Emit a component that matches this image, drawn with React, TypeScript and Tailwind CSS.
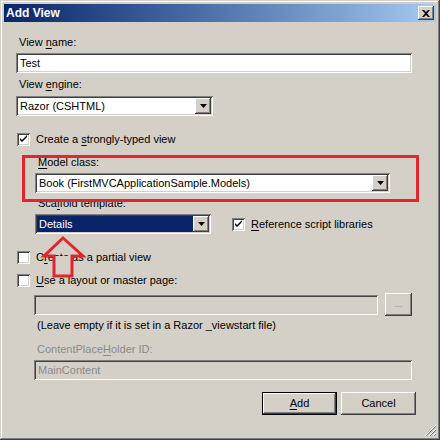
import type { ReactNode } from 'react';

const raised =
  'shadow-[inset_-1px_-1px_#404040,inset_1px_1px_#ffffff,inset_-2px_-2px_#808080,inset_2px_2px_#d4d0c8]';
const sunken =
  'shadow-[inset_1px_1px_#808080,inset_-1px_-1px_#ffffff,inset_2px_2px_#404040,inset_-2px_-2px_#d4d0c8]';

function Label({ children, disabled }: { children: ReactNode; disabled?: boolean }) {
  return (
    <div className={`h-[13px] text-[11px] leading-[13px] pl-[3px] ${disabled ? 'text-[#8a8a8a]' : 'text-black'}`}>
      {children}
    </div>
  );
}

function U({ children }: { children: ReactNode }) {
  return <span className="underline underline-offset-[2px] decoration-1">{children}</span>;
}

function Checkbox({ checked }: { checked?: boolean }) {
  return (
    <div className={`relative h-[13px] w-[13px] shrink-0 bg-white ${sunken}`}>
      {checked && (
        <svg className="absolute left-0 top-0" width="13" height="13" viewBox="0 0 13 13">
          <path d="M3 5 L3 7 L5 9 L10 4 L10 2 L5 7 Z" fill="#000" />
        </svg>
      )}
    </div>
  );
}

function DropArrow() {
  return (
    <div className={`flex h-full w-[16px] shrink-0 items-center justify-center bg-[#d4d0c8] ${raised}`}>
      <svg width="7" height="4" viewBox="0 0 7 4">
        <path d="M0 0 H7 L3.5 4 Z" fill="#000" />
      </svg>
    </div>
  );
}

function Select({ value, width, selected }: { value: string; width: string; selected?: boolean }) {
  return (
    <div className={`flex h-[20px] ${width} bg-white p-[2px] ${sunken}`}>
      <div
        className={`flex flex-1 items-center pl-[2px] text-[11px] ${
          selected ? 'bg-[#0a246a] text-white' : 'text-black'
        }`}
      >
        {value}
      </div>
      <DropArrow />
    </div>
  );
}

function TextBox({ value, width, disabled }: { value?: string; width: string; disabled?: boolean }) {
  return (
    <div
      className={`flex h-[20px] ${width} items-center pl-[4px] text-[11px] ${sunken} ${
        disabled ? 'bg-[#d4d0c8] text-[#8a8a8a]' : 'bg-white text-black'
      }`}
    >
      {value}
    </div>
  );
}

function Button({ children, isDefault }: { children: ReactNode; isDefault?: boolean }) {
  return (
    <div
      className={`flex h-[23px] w-[75px] items-center justify-center bg-[#d4d0c8] text-[11px] text-black ${
        isDefault
          ? 'border border-black shadow-[inset_-1px_-1px_#404040,inset_1px_1px_#ffffff,inset_-2px_-2px_#808080]'
          : raised
      }`}
    >
      {children}
    </div>
  );
}

export default function App() {
  return (
    <div className="relative h-[440px] w-[440px] bg-[#d4d0c8] p-[4px] font-['Liberation_Sans',Arial,sans-serif] shadow-[inset_-1px_-1px_#404040,inset_1px_1px_#d4d0c8,inset_-2px_-2px_#808080,inset_2px_2px_#ffffff]">
      <div className="flex h-[18px] items-center justify-between bg-gradient-to-r from-[#0a246a] to-[#a6caf0] pl-[2px] pr-[2px]">
        <span className="text-[12px] font-bold text-white">Add View</span>
        <div className={`flex h-[14px] w-[16px] items-center justify-center bg-[#d4d0c8] ${raised}`}>
          <svg width="8" height="7" viewBox="0 0 8 7">
            <path d="M0 0 H2 L4 2 L6 0 H8 L5 3.5 L8 7 H6 L4 5 L2 7 H0 L3 3.5 Z" fill="#000" />
          </svg>
        </div>
      </div>

      <div className="flex flex-col pl-[12px] pr-[24px]">
        <div className="mt-[14px]">
          <Label>
            View <U>n</U>ame:
          </Label>
        </div>
        <div className="mt-[4px]">
          <TextBox value="Test" width="w-full" />
        </div>
        <div className="mt-[5px]">
          <Label>
            View <U>e</U>ngine:
          </Label>
        </div>
        <div className="mt-[5px]">
          <Select value="Razor (CSHTML)" width="w-[197px]" />
        </div>

        <div className="mt-[17px] flex h-[13px] items-center gap-[6px] pl-[1px] text-[11px]">
          <Checkbox checked />
          <span>
            Create a <U>s</U>trongly-typed view
          </span>
        </div>

        <div className="flex flex-col pl-[19px]">
          <div className="mt-[10px]">
            <Label>
              <U>M</U>odel class:
            </Label>
          </div>
          <div className="mt-[4px]">
            <Select value="Book (FirstMVCApplicationSample.Models)" width="w-[355px]" />
          </div>
          <div className="mt-[4px]">
            <Label>
              Sca<U>f</U>fold template:
            </Label>
          </div>
          <div className="mt-[4px] flex items-center">
            <Select value="Details" width="w-[176px]" selected />
            <div className="ml-[21px] flex items-center gap-[6px] text-[11px]">
              <Checkbox checked />
              <span>
                <U>R</U>eference script libraries
              </span>
            </div>
          </div>
        </div>

        <div className="mt-[17px] flex h-[13px] items-center gap-[6px] pl-[1px] text-[11px]">
          <Checkbox />
          <span>
            C<U>r</U>eate as a partial view
          </span>
        </div>
        <div className="mt-[10px] flex h-[13px] items-center gap-[6px] pl-[1px] text-[11px]">
          <Checkbox />
          <span>
            <U>U</U>se a layout or master page:
          </span>
        </div>

        <div className="flex flex-col pl-[18px]">
          <div className="mt-[6px] flex h-[23px] items-center gap-[7px]">
            <TextBox width="w-[344px]" disabled />
            <div className={`flex h-[23px] w-[27px] items-center justify-center bg-[#d4d0c8] text-[9px] text-[#8a8a8a] ${raised}`}>
              ...
            </div>
          </div>
          <div className="mt-[3px]">
            <Label>(Leave empty if it is set in a Razor _viewstart file)</Label>
          </div>
          <div className="mt-[11px]">
            <Label disabled>
              ContentPlace<U>H</U>older ID:
            </Label>
          </div>
          <div className="mt-[4px]">
            <TextBox value="MainContent" width="w-full" disabled />
          </div>
        </div>

        <div className="-mr-[4px] mt-[12px] flex justify-end gap-[4px]">
          <Button isDefault>
            <U>A</U>dd
          </Button>
          <Button>Cancel</Button>
        </div>
      </div>

      {/* annotation overlays */}
      <div className="pointer-events-none absolute left-[22px] top-[155px] h-[47px] w-[397px] border-[3px] border-[#e3262e]" />
      <svg className="pointer-events-none absolute left-0 top-0" width="440" height="440">
        <rect x="54" y="256" width="18" height="20" fill="#d4d0c8" />
        <polygon
          points="63,238 83,256 72,256 72,276 54,276 54,256 44,256"
          fill="none"
          stroke="#e3262e"
          strokeWidth="3"
          strokeLinejoin="miter"
        />
        <g stroke="#ffffff" strokeWidth="1">
          <line x1="436" y1="425" x2="425" y2="436" />
          <line x1="436" y1="429" x2="429" y2="436" />
          <line x1="436" y1="433" x2="433" y2="436" />
        </g>
        <g stroke="#808080" strokeWidth="1">
          <line x1="436" y1="426" x2="426" y2="436" />
          <line x1="436" y1="430" x2="430" y2="436" />
          <line x1="436" y1="434" x2="434" y2="436" />
        </g>
      </svg>
    </div>
  );
}
